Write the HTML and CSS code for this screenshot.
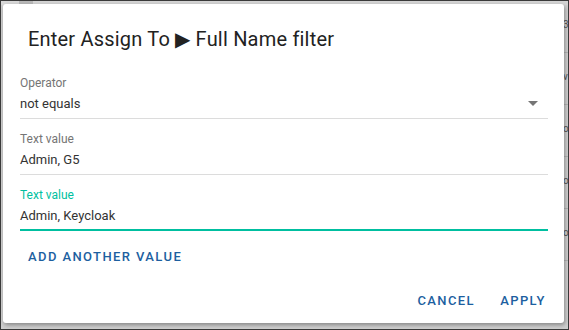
FILE: index.html
```html
<!DOCTYPE html>
<html>
<head>
    <title>Full Name filter</title>
    <link rel="stylesheet" href="styles.css">
</head>
<body>
    <div class="screen">
        <div class="backdrop">
            <div class="strip-top"></div>
            <div class="strip-right">
                <span class="cell">3</span>
                <span class="cell">v</span>
                <span class="cell">o</span>
                <span class="cell">o</span>
                <span class="cell">o</span>
            </div>
        </div>

        <div class="dialog">
            <h2 class="dialog-title">Enter Assign To &#9654; Full Name filter</h2>

            <div class="dialog-content">
                <div class="field select">
                    <label>Operator</label>
                    <div class="value">not equals</div>
                    <svg class="arrow" width="10" height="5" viewBox="0 0 10 5"><path d="M0 0h10L5 5z" fill="#757575"/></svg>
                </div>
                <div class="field">
                    <label>Text value</label>
                    <div class="value">Admin, G5</div>
                </div>
                <div class="field focused">
                    <label>Text value</label>
                    <div class="value">Admin, Keycloak</div>
                </div>
                <button class="text-btn add-btn">Add another value</button>
            </div>

            <div class="dialog-actions">
                <button class="text-btn">Cancel</button>
                <button class="text-btn">Apply</button>
            </div>
        </div>
    </div>
</body>
</html>
```

FILE: styles.css
```css
* {
    box-sizing: border-box;
}
body {
    margin: 0;
    font-family: Roboto, "Liberation Sans", sans-serif;
}
.screen {
    width: 569px;
    height: 330px;
    border: 1px solid #3a3a3a;
    position: relative;
    overflow: hidden;
    background: #cfcfcf;
}
.backdrop {
    position: absolute;
    inset: 0;
}
.strip-top {
    height: 4px;
    background: linear-gradient(90deg, #d8d8d8 0 18px, #b8b8b8 18px 32px, #d4d4d4 32px);
}
.strip-right {
    position: absolute;
    right: 0;
    top: 0;
    width: 5px;
    height: 100%;
    display: flex;
    flex-direction: column;
    font-size: 10px;
    color: #555;
}
.strip-right .cell {
    height: 52px;
    padding-top: 18px;
    border-bottom: 1px solid #b5b5b5;
    overflow: hidden;
}
.dialog {
    position: absolute;
    left: 2px;
    top: 3px;
    width: 561px;
    height: 319px;
    background: #fff;
    border-radius: 3px;
    box-shadow: 1px 2px 4px rgba(0,0,0,0.35);
    display: flex;
    flex-direction: column;
}
.dialog-title {
    margin: 0;
    padding: 23px 25px 12px;
    font-size: 20px;
    line-height: 24px;
    font-weight: 400;
    letter-spacing: 0.2px;
    color: #222;
}
.dialog-content {
    padding: 0 16px 0 17px;
    flex: 1;
}
.field {
    position: relative;
    padding-top: 13px;
    border-bottom: 1px solid #dcdcdc;
    padding-bottom: 4px;
}
.field label {
    display: block;
    font-size: 12px;
    line-height: 14px;
    color: #757575;
}
.field .value {
    margin-top: 4px;
    font-size: 13px;
    line-height: 20px;
    color: #333;
}
.field.focused {
    border-bottom: 2px solid #00bfa0;
    padding-bottom: 3px;
}
.field.focused label {
    color: #00bfa0;
}
.arrow {
    position: absolute;
    right: 10px;
    top: 38px;
}
.text-btn {
    background: none;
    border: none;
    font-family: inherit;
    font-size: 13px;
    font-weight: 500;
    letter-spacing: 1.4px;
    text-transform: uppercase;
    color: #1d5fa0;
    padding: 0 8px;
    height: 36px;
    min-width: 64px;
    cursor: pointer;
}
.add-btn {
    margin-top: 7px;
}
.dialog-actions {
    display: flex;
    justify-content: flex-end;
    gap: 8px;
    padding: 0 9px 5px 0;
}
```
